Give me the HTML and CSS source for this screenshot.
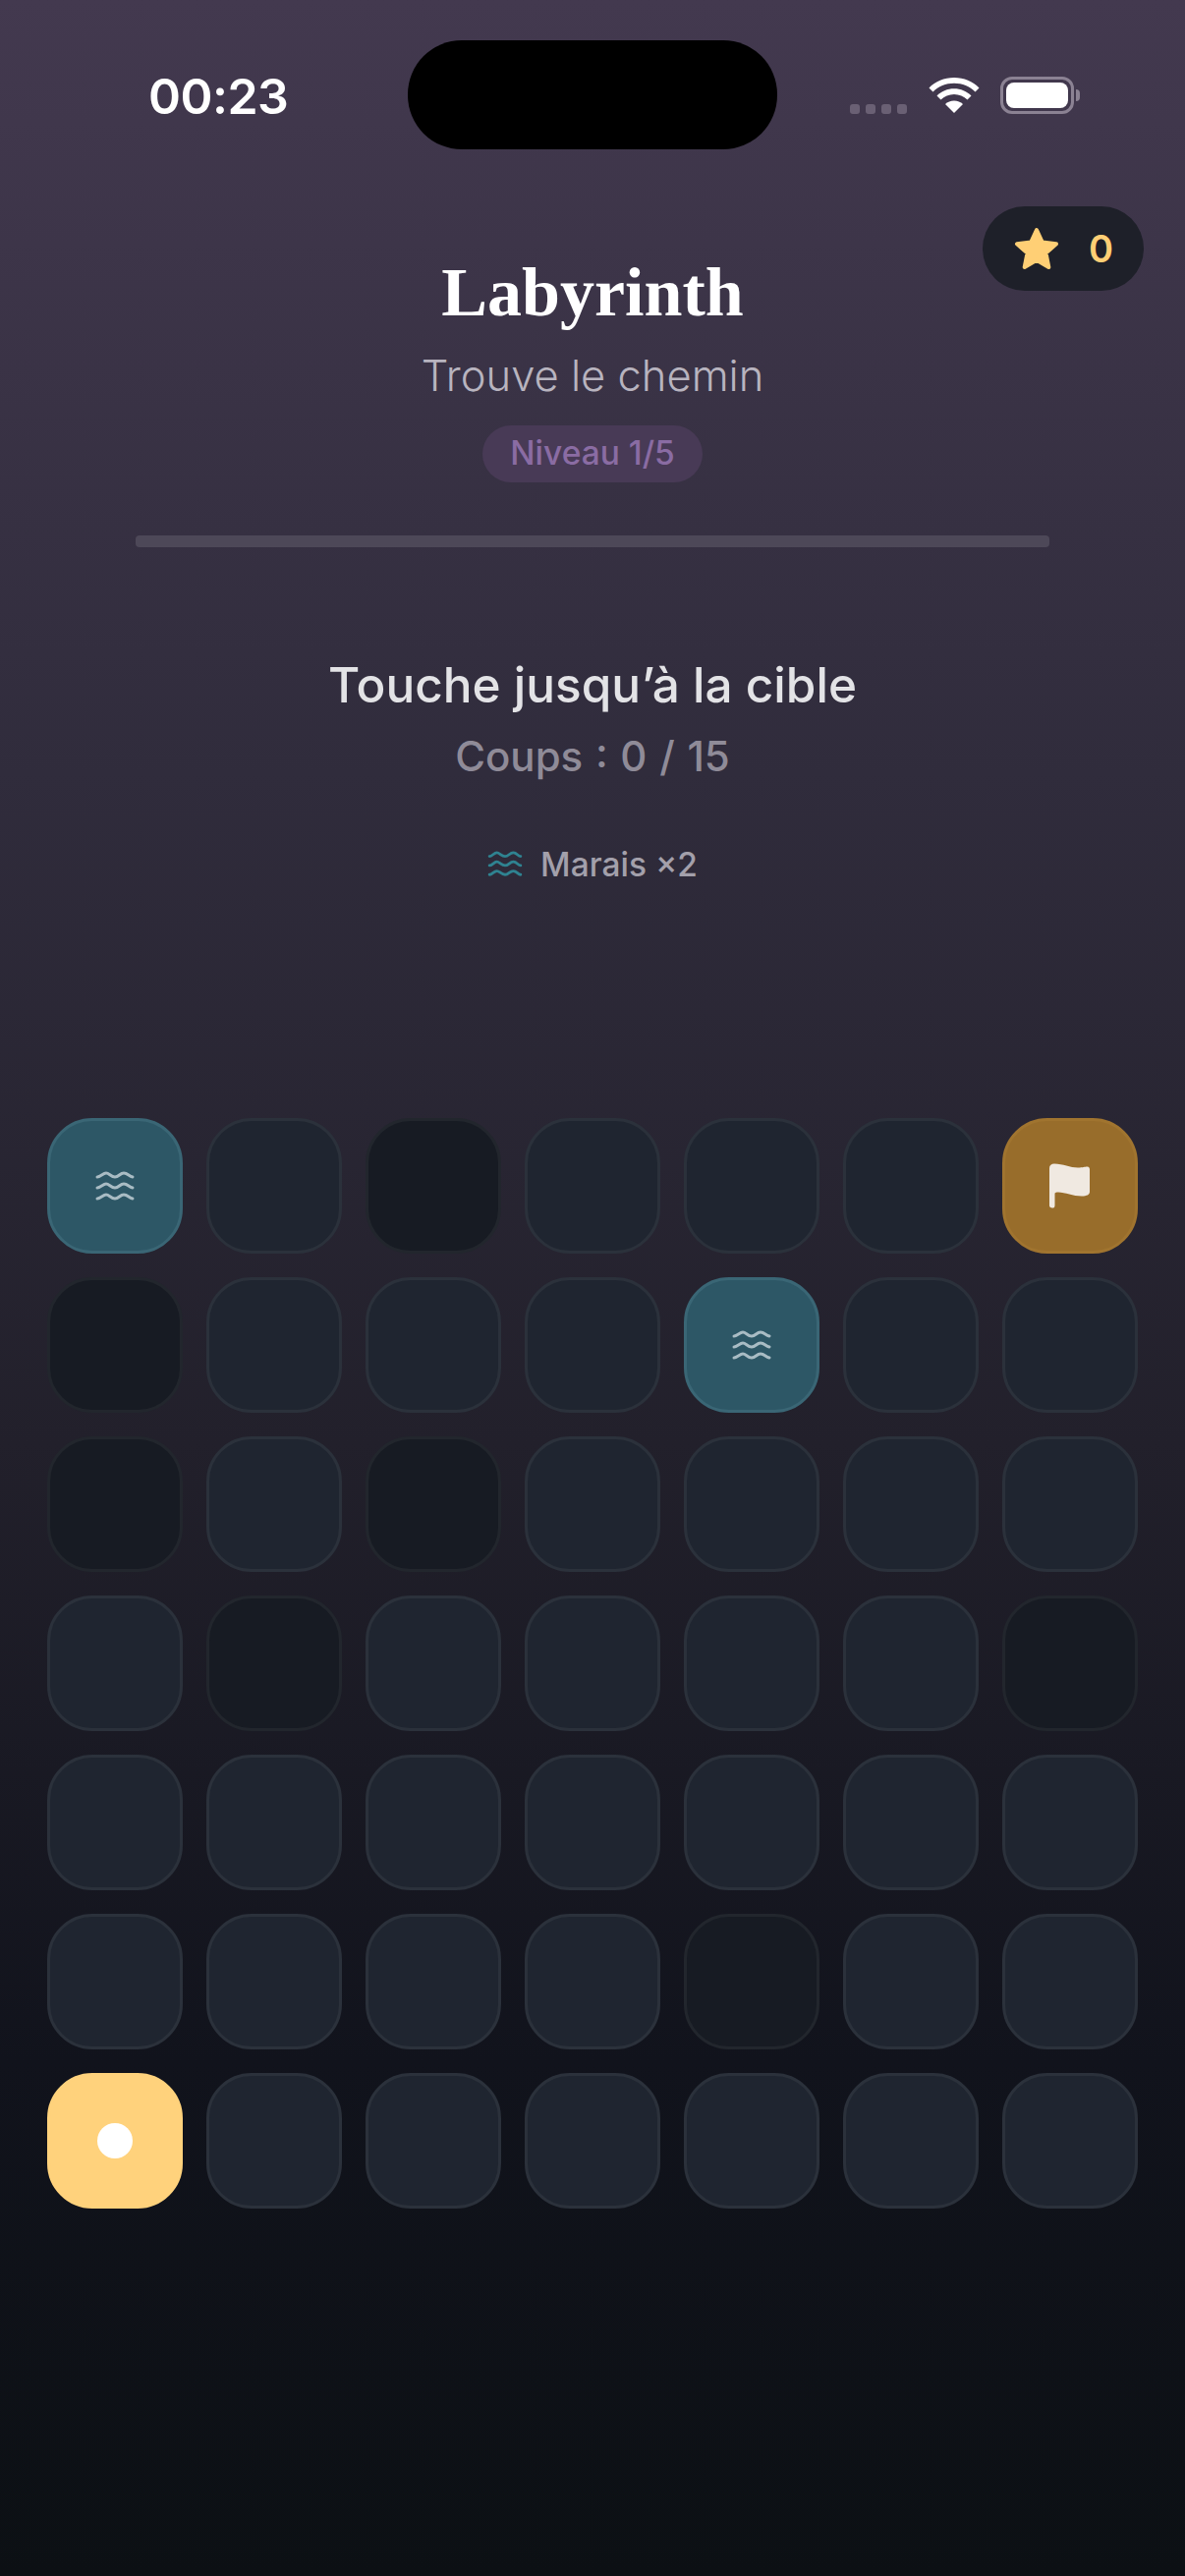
FILE: index.html
```html
<!DOCTYPE html>
<html lang="fr">

<head>
    <meta charset="UTF-8">
    <meta name="viewport" content="width=device-width, initial-scale=1.0">
    <title>Labyrinth</title>
    <link rel="stylesheet" href="styles.css">
</head>

<body>
    <div class="screen">
        <div class="status-bar">
            <span class="clock">00:23</span>
            <div class="island"></div>
            <div class="status-icons">
                <div class="signal"><i></i><i></i><i></i><i></i></div>
                <svg class="wifi" width="52" height="38" viewBox="0 0 52 38">
                    <path fill="#fff" d="M0.5 11.5C7 4.8 16 1 26 1s19 3.8 25.5 10.500L47.500 15.500C42 10 34.500 6.800 26 6.800S10 10 4.500 15.500Z" />
                    <path fill="#fff" d="M8.500 19.500C13 15 19.200 12.300 26 12.300s13 2.700 17.500 7.200L39.500 23.500C36 20.100 31.200 18 26 18s-10 2.100-13.500 5.500Z" />
                    <path fill="#fff" d="M17 28C19.300 25.800 22.500 24.500 26 24.500s6.700 1.300 9 3.500L26 37Z" />
                </svg>
                <div class="battery">
                    <div class="battery-body"><div class="battery-fill"></div></div>
                    <div class="battery-cap"></div>
                </div>
            </div>
        </div>

        <div class="score">
            <svg width="46" height="44" viewBox="0 0 46 44">
                <path fill="#ffcf75" stroke="#ffcf75" stroke-width="4" stroke-linejoin="round" d="M23 3L28.800 15.600L43 17.300L32.500 26.600L35.300 41L23 33.800L10.700 41L13.500 26.600L3 17.300L17.200 15.600Z" />
            </svg>
            <span>0</span>
        </div>

        <header class="title-block">
            <h1>Labyrinth</h1>
            <p class="subtitle">Trouve le chemin</p>
            <span class="level">Niveau 1/5</span>
        </header>

        <div class="progress"></div>

        <section class="goal">
            <h2>Touche jusqu’à la cible</h2>
            <p class="moves">Coups : 0 / 15</p>
            <div class="legend">
                <svg width="36" height="28" viewBox="0 0 38 30">
                    <g fill="none" stroke="#2f8391" stroke-width="3" stroke-linecap="round">
                        <path d="M2 6C5 6 7 2 10 2S15 6 19 6S24 2 28 2S33 6 36 6" />
                        <path d="M2 16C5 16 7 12 10 12S15 16 19 16S24 12 28 12S33 16 36 16" />
                        <path d="M2 26C5 26 7 22 10 22S15 26 19 26S24 22 28 22S33 26 36 26" />
                    </g>
                </svg>
                <span>Marais ×2</span>
            </div>
        </section>

        <div class="grid">
            <div class="cell swamp">
                <svg class="waves" width="40" height="30" viewBox="0 0 40 30">
                    <g fill="none" stroke="#a9bcc4" stroke-width="3" stroke-linecap="round">
                        <path d="M2 6C5 6 8 2 11 2S16 6 20 6S25 2 29 2S34 5 38 6" />
                        <path d="M2 17C5 17 8 13 11 13S16 17 20 17S25 13 29 13S34 16 38 17" />
                        <path d="M2 28C5 28 8 24 11 24S16 28 20 28S25 24 29 24S34 27 38 28" />
                    </g>
                </svg>
            </div>
            <div class="cell"></div>
            <div class="cell wall"></div>
            <div class="cell"></div>
            <div class="cell"></div>
            <div class="cell"></div>
            <div class="cell goal-cell">
                <svg width="42" height="46" viewBox="0 0 42 46">
                    <path fill="#f0e9e1" d="M0 5C0 2 2 0.500 5 0.500C14 0.500 21 4.500 29 4.500C34 4.500 36 3.500 38.500 3.500C40.500 3.500 41 5 41 6.500V29C41 32 38 33.500 33 33.500C24 33.500 16 29.500 9 29.500C7 29.500 6 30 5.500 30.500V43C5.500 45 4.500 45.500 3 45.500C1 45.500 0 44.500 0 43Z" />
                </svg>
            </div>

            <div class="cell wall"></div>
            <div class="cell"></div>
            <div class="cell"></div>
            <div class="cell"></div>
            <div class="cell swamp">
                <svg class="waves" width="40" height="30" viewBox="0 0 40 30">
                    <g fill="none" stroke="#a9bcc4" stroke-width="3" stroke-linecap="round">
                        <path d="M2 6C5 6 8 2 11 2S16 6 20 6S25 2 29 2S34 5 38 6" />
                        <path d="M2 17C5 17 8 13 11 13S16 17 20 17S25 13 29 13S34 16 38 17" />
                        <path d="M2 28C5 28 8 24 11 24S16 28 20 28S25 24 29 24S34 27 38 28" />
                    </g>
                </svg>
            </div>
            <div class="cell"></div>
            <div class="cell"></div>

            <div class="cell wall"></div>
            <div class="cell"></div>
            <div class="cell wall"></div>
            <div class="cell"></div>
            <div class="cell"></div>
            <div class="cell"></div>
            <div class="cell"></div>

            <div class="cell"></div>
            <div class="cell wall"></div>
            <div class="cell"></div>
            <div class="cell"></div>
            <div class="cell"></div>
            <div class="cell"></div>
            <div class="cell wall"></div>

            <div class="cell"></div>
            <div class="cell"></div>
            <div class="cell"></div>
            <div class="cell"></div>
            <div class="cell"></div>
            <div class="cell"></div>
            <div class="cell"></div>

            <div class="cell"></div>
            <div class="cell"></div>
            <div class="cell"></div>
            <div class="cell"></div>
            <div class="cell wall"></div>
            <div class="cell"></div>
            <div class="cell"></div>

            <div class="cell player"><div class="dot"></div></div>
            <div class="cell"></div>
            <div class="cell"></div>
            <div class="cell"></div>
            <div class="cell"></div>
            <div class="cell"></div>
            <div class="cell"></div>
        </div>
    </div>
</body>

</html>
```

FILE: styles.css
```css
* {
    box-sizing: border-box;
}

html,
body {
    margin: 0;
    padding: 0;
}

.screen {
    position: relative;
    width: 1206px;
    height: 2622px;
    overflow: hidden;
    font-family: Inter, "Noto Sans", sans-serif;
    background: linear-gradient(180deg, #43394f 0%, #302c3c 30%, #22202b 56%, #11131c 80%, #0c1014 100%);
}

.status-bar {
    height: 152px;
    padding-top: 41px;
    display: flex;
    align-items: flex-start;
}

.clock {
    width: 415px;
    padding-top: 27px;
    padding-left: 151px;
    color: #fff;
    font-size: 50px;
    line-height: 60px;
    font-weight: 600;
    letter-spacing: -0.5px;
}

.island {
    width: 376px;
    height: 111px;
    border-radius: 55px;
    background: #000;
}

.status-icons {
    margin-left: 74px;
    padding-top: 37px;
    display: flex;
    align-items: flex-end;
}

.signal {
    display: flex;
    gap: 6px;
}

.signal i {
    width: 10px;
    height: 10px;
    border-radius: 3px;
    background: #6a6074;
}

.wifi {
    margin-left: 22px;
}

.battery {
    margin-left: 21px;
    display: flex;
    align-items: center;
}

.battery-body {
    width: 75px;
    height: 38px;
    padding: 3px;
    border: 3px solid #8b8293;
    border-radius: 12px;
}

.battery-fill {
    height: 100%;
    border-radius: 8px;
    background: #fff;
}

.battery-cap {
    width: 4px;
    height: 12px;
    margin-left: 2px;
    border-radius: 0 4px 4px 0;
    background: #8b8293;
}

.score {
    position: absolute;
    top: 210px;
    left: 1000px;
    width: 164px;
    height: 86px;
    padding-left: 32px;
    display: flex;
    align-items: center;
    gap: 30px;
    border-radius: 43px;
    background: #1e2029;
    color: #ffcf75;
    font-size: 38px;
    font-weight: 600;
}

.title-block {
    display: flex;
    flex-direction: column;
    align-items: center;
}

h1 {
    margin: 104px 0 0;
    color: #fff;
    font-family: "Liberation Serif", serif;
    font-size: 70px;
    line-height: 84px;
    font-weight: 700;
}

.subtitle {
    margin: 16px 0 0;
    color: #b8b4bf;
    font-size: 43.5px;
    line-height: 52px;
    font-weight: 300;
}

.level {
    margin-top: 25px;
    width: 224px;
    height: 58px;
    border-radius: 29px;
    background: #483a56;
    color: #8a6ca3;
    font-size: 33.5px;
    line-height: 56px;
    font-weight: 500;
    text-align: center;
}

.progress {
    width: 930px;
    height: 12px;
    margin: 54px auto 0;
    border-radius: 4px;
    background: #4d4858;
}

.goal {
    text-align: center;
}

h2 {
    margin: 111px 0 0;
    color: #e3e3e6;
    font-size: 49.5px;
    line-height: 58px;
    font-weight: 500;
}

.moves {
    margin: 20px 0 0;
    color: #8f8b98;
    font-size: 42px;
    line-height: 48px;
    font-weight: 500;
    word-spacing: 1.5px;
}

.legend {
    margin-top: 66px;
    display: flex;
    justify-content: center;
    align-items: center;
    gap: 18px;
    color: #a3a0ab;
    font-size: 33.5px;
    line-height: 40px;
    font-weight: 500;
}

.grid {
    margin-top: 238px;
    padding: 0 48px;
    display: grid;
    grid-template-columns: repeat(7, 138px);
    grid-auto-rows: 138px;
    gap: 24px;
}

.cell {
    display: flex;
    align-items: center;
    justify-content: center;
    border: 3px solid #2b313b;
    border-radius: 46px;
    background: #1f2530;
}

.wall {
    border-color: #22262d;
    background: #171b23;
}

.swamp {
    border-color: #3a6675;
    background: #2d5766;
}

.goal-cell {
    border-color: #a0742f;
    background: #986d2b;
}

.player {
    border-color: #ffd27c;
    background: #ffd27c;
}

.dot {
    width: 36px;
    height: 36px;
    border-radius: 50%;
    background: #fff;
}
```
